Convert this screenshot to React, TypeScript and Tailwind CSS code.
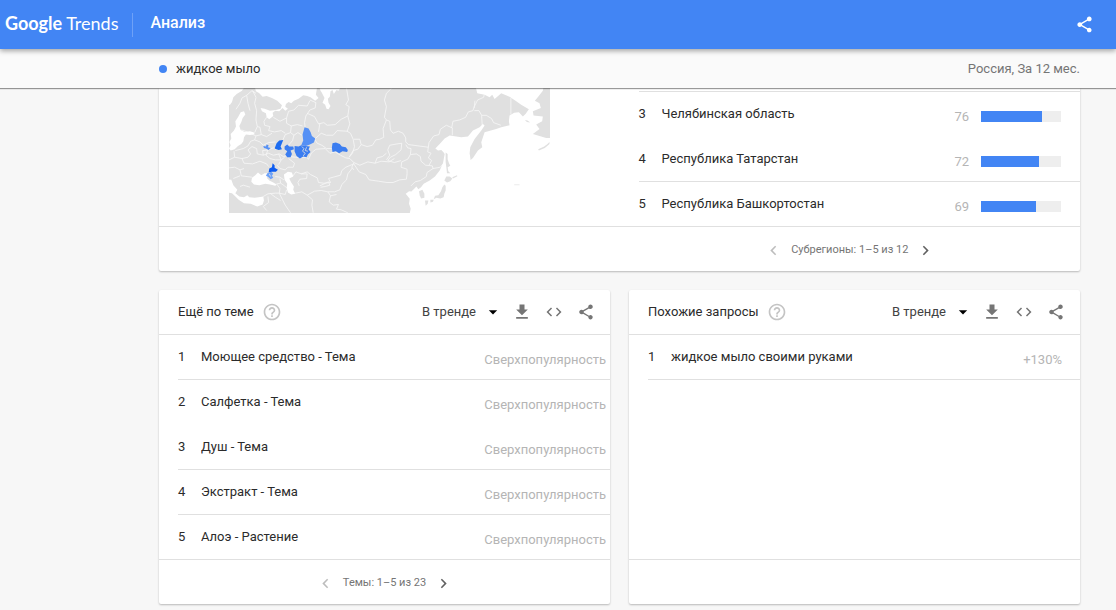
import React from 'react';
import {
  MdArrowDropDown,
  MdChevronLeft,
  MdChevronRight,
  MdCode,
  MdFileDownload,
  MdHelpOutline,
  MdShare,
} from 'react-icons/md';

interface IRow {
  rank: number,
  name: string,
  value: string,
  score?: number,
  noDivider?: boolean,
}

const regions: IRow[] = [
  { rank: 3, name: 'Челябинская область', value: '76', score: 76, noDivider: true },
  { rank: 4, name: 'Республика Татарстан', value: '72', score: 72 },
  { rank: 5, name: 'Республика Башкортостан', value: '69', score: 69, noDivider: true },
];

const topics: IRow[] = [
  { rank: 1, name: 'Моющее средство - Тема', value: 'Сверхпопулярность' },
  { rank: 2, name: 'Салфетка - Тема', value: 'Сверхпопулярность', noDivider: true },
  { rank: 3, name: 'Душ - Тема', value: 'Сверхпопулярность' },
  { rank: 4, name: 'Экстракт - Тема', value: 'Сверхпопулярность' },
  { rank: 5, name: 'Алоэ - Растение', value: 'Сверхпопулярность', noDivider: true },
];

const queries: IRow[] = [
  { rank: 1, name: 'жидкое мыло своими руками', value: '+130%' },
];

const seas = [
  // Norwegian and Barents seas with the White Sea
  'M20 20H74L66 32L50 42L40 52L36 66L30 74L20 78Z',
  'M104 20H292L288 44L296 54L286 62L272 52L262 48L250 46L236 56L222 62L214 70L206 66L198 72L196 80L204 86L196 92L188 84L178 94L166 92L158 98L160 108L148 118L140 112L138 100L126 94L122 84L134 86L150 92L168 90L182 86L186 76L172 62L156 54L140 48L128 50L118 40L108 34Z',
  // Kara Sea and the Ob gulf
  'M298 20H364L356 32L350 30L342 42L338 30L332 34L330 50L324 56L326 68L332 78L326 88L320 86L316 74L308 68L314 54L306 38L302 32Z',
  // Baltic
  'M62 97L72 94L76 104L68 114L64 126L58 138L62 150L74 156L90 154L102 158L104 163L90 165L78 164L72 172L70 184L64 192L54 198L44 208L32 212L27 206L32 196L28 186L34 176L32 162L42 152L48 140L46 124L54 112Z',
  // Black Sea and Azov
  'M96 294L106 286L114 278L124 286L134 280L144 280L148 288L140 294L148 302L160 308L170 314L166 318L150 314L136 312L118 316L102 314L94 306Z',
  // Caspian
  'M192 284L204 276L216 278L220 290L208 296L214 308L222 320L220 330L226 342L214 344L204 338L200 324L202 312L194 300Z',
  // Mediterranean
  'M20 298L34 300L40 316L52 330L46 340L58 350L72 352L82 346L88 352L104 354L116 352L130 350L132 362L128 374L112 380L92 372L72 370L56 360L44 348L36 340L20 338Z',
  // Sea of Okhotsk, Kamchatka and the Pacific
  'M768 20H972L970 32L956 50L946 62L960 70L964 84L940 94L942 107L970 110L968 124L950 134L960 147L940 162L965 170L980 174L1000 174V410H568L573 387L568 372L570 357L558 342L568 334L575 335L582 328L590 320L596 328L604 322L612 312L630 302L646 290L660 272L670 250L675 222L672 218L665 210L655 212L647 206L660 192L675 176L690 167L725 172L745 170L760 152L780 142L790 132L795 137L785 152L765 177L752 202L750 220L753 240L760 234L775 212L788 202L785 187L790 172L795 157L830 147L845 142L870 136L868 124L870 107L884 98L898 97L910 110L918 102L928 88L905 74L888 62L870 50L845 40L825 57L818 44L810 52L795 44L773 40Z',
];

const islands = [
  // Korea
  'M598 334L608 330L614 342L614 354L604 356L600 346Z',
  // Sakhalin
  'M678 218L684 222L684 238L688 250L692 258L684 262L686 274L692 280L682 280L680 262L678 246Z',
  // Hokkaido and Honshu
  'M680 290L690 290L698 296L692 304L682 308L674 302Z',
  'M674 314L678 318L678 332L674 342L672 352L662 356L650 354L642 358L646 348L656 346L664 334L668 322Z',
  'M616 362L626 362L624 372L618 378Z',
  'M632 360L642 360L640 366L632 368Z',
  // Kurils and Aleutians
  'M698 292L712 286L713 289L700 296Z',
  'M884 314L900 314L900 316L884 316Z',
  'M956 208L974 200L984 192L990 186L990 192L976 204L958 212Z',
  'M916 120L924 122L932 128L922 126Z',
];

const borders = [
  'M48 88L60 70L66 54L80 46L96 32L108 40M80 46L84 70L90 92',
  'M98 32L108 52L104 70L110 92L108 120L112 140L104 158',
  'M140 112L132 124L134 136L150 140L146 152L164 156L184 152L196 160M160 112L180 124L200 114L206 94L222 90L236 76L262 78L270 62M200 114L200 130L214 138L232 134L248 138',
  'M270 60L288 68L286 84L270 90L258 108L254 128L256 144M262 100L284 110L296 132L312 128L322 136L346 134L364 118L384 108L388 80L378 74L386 60L380 24',
  'M384 108L390 132L382 154L392 160L400 178L404 200L398 220L388 232',
  'M284 178L304 160L320 166L340 166L352 152L384 154M284 178L292 190L306 196L320 206L338 206M296 156L300 130',
  'M64 150L82 156L108 168L104 180L92 184L84 198L70 206L46 212M108 168L124 164L140 170L156 160M104 180L120 186L130 196L146 188L166 186M124 164L120 142L112 140',
  'M27 240L44 232L66 236L84 232L92 222L84 210L96 200L110 206L112 222L130 226L146 220L160 226M44 232L42 214M66 236L72 250L98 252L120 244L140 252L146 260M27 264L44 262L60 270L72 266M60 270L64 288L96 292M40 296L60 288',
  'M130 226L128 212L144 210L160 204L168 208M160 226L178 222L190 230L206 226M176 222L184 240L176 254M188 182L196 164L212 158L222 166L218 182L206 196M222 166L234 158L246 166M212 158L214 138M166 240L184 240L194 232M144 210L138 226L150 236L166 240',
  'M206 230L228 232L244 232L260 232L266 238L274 220L288 208L316 206L330 220L346 216L362 226L378 234L390 236L402 248L396 262L402 270',
  'M172 256L180 266L196 270L204 262L220 262L224 250L206 236M166 290L180 292L192 300M170 312L182 310L194 318L200 324M182 310L180 296',
  'M218 290L228 276L244 282L262 282L260 296L240 298L234 308L238 318M244 282L262 276L272 284L292 294L296 308L312 310L332 308L326 296L340 292L362 286L366 272L378 262L402 252',
  'M226 340L246 336L262 346L278 360L276 376L280 399M262 346L284 334L304 332L324 336L332 348L350 344M302 322L316 320L330 316L326 306L300 318M332 348L328 366L340 376L356 374L350 388L364 390L384 399',
  'M402 248L420 256L444 246L466 250L484 244L508 246L524 236M402 252L418 276L438 284L448 300L476 304L502 308L520 308L540 300L560 298L562 282M324 336L344 336L360 330L366 314L380 300L384 282L398 264',
  'M170 312L180 326L178 340L196 344L200 330M130 350L144 342L166 340L178 340L188 360L196 376L212 399M144 350L146 368L130 380L140 392M90 322L70 316L60 320M150 340L166 352L182 362',
  'M516 24L500 40L494 60L500 80L494 112L500 120L510 124L512 150L520 160L536 154L550 160L558 174L558 186L566 194L626 202L628 188L642 168L658 164L662 148L680 136L698 144L698 166',
  'M480 178L492 172L490 146L500 120M500 240L510 226L504 210L510 196L532 192L546 190L544 210L528 224L512 232L504 242L524 248L544 242M558 194L564 204L574 206L572 224L564 238L546 246',
  'M572 224L590 222L602 230L604 244L618 256L638 258L640 266L622 278L620 290L602 302L586 306L574 318M626 202L624 216L634 220L626 234L636 242L628 256M640 266L662 262L670 252M546 246L544 262L562 268L562 282',
  'M696 144L700 124L720 120L738 112L746 96L760 92L764 80L774 60L792 52L794 44M764 92L778 92L786 106L800 106L816 116L822 128L844 136M786 106L788 138M874 54L874 104M766 62L764 84',
  'M388 232L400 212L414 208L424 194L442 200L458 196L468 180L480 178M424 194L420 178L402 178M466 250L472 234L488 230L500 220',
];

const activeRegions = [
  { fill: '#5590f5', d: 'M254 142L266 146L272 156L276 168L286 176L282 188L270 194L258 198L244 196L250 182L248 164Z' },
  { fill: '#3b7df0', d: 'M224 198L236 200L244 196L256 198L270 200L266 208L272 216L264 224L260 232L250 230L240 236L230 228L224 214Z' },
  { fill: '#3b7df0', d: 'M194 200L202 194L208 200L220 200L222 208L212 212L216 222L212 232L202 232L196 224L202 214L194 208Z' },
  { fill: '#1d6cf0', d: 'M170 190L178 182L190 180L186 190L182 200L186 208L176 210L164 206Z' },
  { fill: '#5590f5', d: 'M130 198L138 200L140 194L146 196L144 202L152 204L146 210L138 206L132 204Z' },
  { fill: '#3b7df0', d: 'M338 190L348 188L360 192L366 200L378 202L384 210L382 216L368 214L358 220L348 214L338 216L336 204Z' },
  { fill: '#0d5cf0', d: 'M158 250L164 256L164 264L174 270L168 276L156 276L146 278L148 266L156 262Z' },
  { fill: '#6da1f7', d: 'M142 280L154 276L160 282L156 288L160 294L152 298L146 292L138 288Z' },
];

const RegionMap: React.FC = () => (
  <svg viewBox="27 24 963 375" className="block w-full" role="img" aria-label="Карта субрегионов">
    <rect x="20" y="20" width="980" height="390" fill="#e0e0e0" />
    {borders.map((d) => (
      <path key={d} d={d} fill="none" stroke="#f7f7f7" strokeWidth="2.5" strokeLinejoin="round" />
    ))}
    {seas.map((d) => <path key={d} d={d} fill="#fff" />)}
    {islands.map((d) => <path key={d} d={d} fill="#e0e0e0" />)}
    {activeRegions.map(({ d, fill }) => <path key={d} d={d} fill={fill} />)}
    <path d="M246 200L252 206L248 214L256 220L250 228M260 202L256 212L264 214M148 282L152 290" fill="none" stroke="#e0e0e0" strokeWidth="2.5" />
  </svg>
);

const RankList: React.FC<{ rows: IRow[], valueClass: string }> = ({ rows, valueClass }) => (
  <ol className="ml-[19px]">
    {rows.map(({ rank, name, value, score, noDivider }) => (
      <li
        key={rank}
        className={`flex h-[45px] items-center border-b ${noDivider ? 'border-transparent' : 'border-[#e0e0e0]'}`}
      >
        <span className="w-[23px] shrink-0">{rank}</span>
        <a href="#" className="grow truncate">{name}</a>
        <span className={`flex shrink-0 items-center pt-1.5 text-[#b5b5b5] ${valueClass}`}>
          {value}
          {score !== undefined && (
            <span className="mb-px ml-3 block h-[11px] w-20 bg-[#eeeeee]">
              <span className="block h-full bg-[#4285f4]" style={{ width: `${score}%` }} />
            </span>
          )}
        </span>
      </li>
    ))}
  </ol>
);

const Pager: React.FC<{ label: string }> = ({ label }) => (
  <nav className="flex h-11 items-center justify-center gap-2 pt-0.5 text-[11px] text-[#757575]">
    <button type="button" aria-label="Назад" disabled className="text-[#bdbdbd]">
      <MdChevronLeft size={19} />
    </button>
    <span>{label}</span>
    <button type="button" aria-label="Вперёд" className="text-[#616161]">
      <MdChevronRight size={19} />
    </button>
  </nav>
);

interface IWidget {
  title: string,
  rows: IRow[],
  valueClass: string,
  pager?: string,
}

const Widget: React.FC<IWidget> = ({ title, rows, valueClass, pager }) => (
  <section className="rounded-xs bg-white shadow-[0_1px_2px_rgba(0,0,0,0.25)]">
    <header className="flex h-[45px] items-center border-b border-[#e0e0e0] pr-2 pl-[19px]">
      <h2>{title}</h2>
      <button type="button" aria-label="Справка" className="ml-2 text-[#c4c4c4]">
        <MdHelpOutline size={20} />
      </button>
      <div className="relative ml-auto w-[84px]">
        <select aria-label={title} className="w-full appearance-none bg-transparent text-[#424242]">
          <option>В тренде</option>
        </select>
        <MdArrowDropDown size={20} className="pointer-events-none absolute top-0 right-[3px] text-black" />
      </div>
      <div className="flex text-[#757575]">
        <button type="button" aria-label="Скачать" className="flex w-8 justify-center"><MdFileDownload size={20} /></button>
        <button type="button" aria-label="Встроить" className="flex w-8 items-center justify-center"><MdCode size={18} /></button>
        <button type="button" aria-label="Поделиться" className="flex w-8 items-center justify-center"><MdShare size={18} /></button>
      </div>
    </header>
    <div className="min-h-[225px]">
      <RankList rows={rows} valueClass={valueClass} />
    </div>
    <footer className="-mt-px min-h-[45px] border-t border-[#e0e0e0]">
      {pager && <Pager label={pager} />}
    </footer>
  </section>
);

const App: React.FC = () => {
  return (
    <div className="min-h-screen bg-[#f7f7f7] font-[Roboto,sans-serif] text-[13px] leading-5 text-[#2b2b2b]">
      <header className="relative z-20 flex h-[49px] items-center bg-[#4285f4] pr-[22px] pl-[5px] text-white shadow-[0_2px_5px_rgba(0,0,0,0.35)]">
        <a href="#" className="flex h-6 items-center gap-1 border-r border-[#6ea1f7] pr-3.5 pb-1 font-[Lato,sans-serif] text-lg">
          <span className="font-bold">Google</span>
          <span>Trends</span>
        </a>
        <h1 className="ml-[17px] pb-1 text-base font-medium">Анализ</h1>
        <button type="button" aria-label="Поделиться" className="ml-auto">
          <MdShare size={19} />
        </button>
      </header>
      <div className="relative z-10 flex h-[39px] items-center bg-[#fafafa] pr-9 pl-[159px] shadow-[0_1px_1px_rgba(0,0,0,0.4)]">
        <span className="mr-[9px] size-2 rounded-full bg-[#4285f4]" />
        <span>жидкое мыло</span>
        <span className="ml-auto text-[#757575]">Россия, За 12 мес.</span>
      </div>
      <main className="pr-9 pb-1.5 pl-[159px]">
        <section className="rounded-b-xs bg-white shadow-[0_1px_2px_rgba(0,0,0,0.25)]">
          <div className="grid grid-cols-2">
            <div className="pr-[70px] pl-[70px]">
              <RegionMap />
            </div>
            <div className="pt-[3px]">
              <div className="ml-[19px] border-t border-[#e0e0e0]" />
              <RankList rows={regions} valueClass="pr-[19px]" />
            </div>
          </div>
          <footer className="-mt-px grid grid-cols-2 border-t border-[#e0e0e0]">
            <div className="col-start-2">
              <Pager label="Субрегионы: 1–5 из 12" />
            </div>
          </footer>
        </section>
        <div className="mt-[19px] grid grid-cols-2 gap-[19px]">
          <Widget title="Ещё по теме" rows={topics} valueClass="pr-1" pager="Темы: 1–5 из 23" />
          <Widget title="Похожие запросы" rows={queries} valueClass="pr-[18px]" />
        </div>
      </main>
    </div>
  );
}

export default App;
